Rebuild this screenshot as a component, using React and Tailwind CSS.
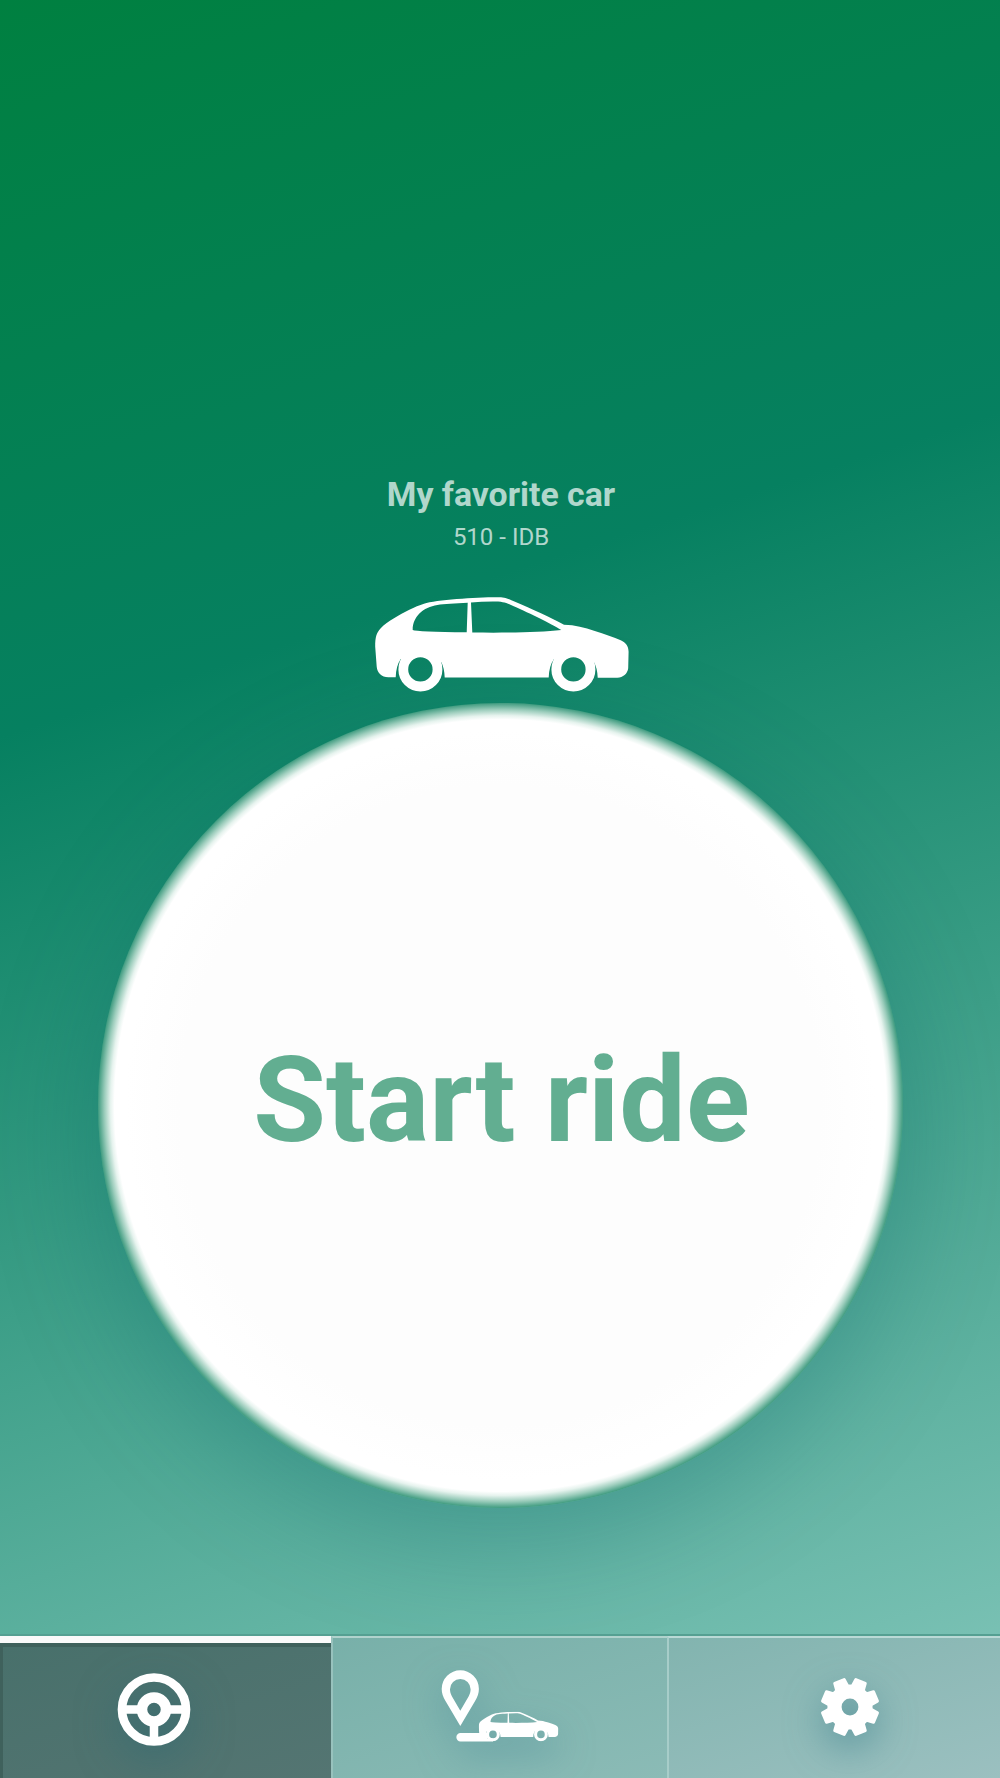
const CAR_BODY =
  "M.2 49.7C.2 40 1.5 36 5.7 31.3C9 27.5 14 24.3 19 21.3C29 15 40 9.5 49 6.7C61 3 100 .3 122 .3C129 .3 131 .8 137 3.5C158 12.5 176 20.5 189 27.7C200 28 210 30.5 219 33.7C230 37.3 239 40 245.7 43.3C251 46 253.4 49 253.6 54.7L253.2 71.3C252.5 77 248 80.5 242.4 80.7H222.7Q222.3 71 219 65.3L215 67A18 18 0 0 0 182 64L179 62Q174 69 173.7 80.6H69.7Q69.3 71 66.4 65.3L62 67A18 18 0 0 0 29 64L25.7 62Q21 69 20.7 80.3H13.4C6.5 80 2.3 76 1.7 69.7ZM37.7 33Q42 34.9 91.7 35.3L92.7 5.7C80 6.2 69 7 62.4 7.9C48 10 37.5 20 37.7 33ZM97.3 35.5C130 36 165 35.4 186.3 33C176 26.5 150 14 136 8C130 5.4 127 4.6 118 4.6Q106 4.7 96 5.5Z";

function CarShape() {
  return (
    <>
      <path fillRule="evenodd" d={CAR_BODY} />
      <g fill="none" stroke="currentColor" strokeWidth="9.8">
        <circle cx="45.4" cy="72.4" r="17.1" />
        <circle cx="198.4" cy="72.4" r="17.1" />
      </g>
    </>
  );
}

function Wheel() {
  return (
    <svg viewBox="0 0 74 74" className="h-[74px] w-[74px] drop-shadow-[0_14px_20px_rgba(30,100,115,0.5)]" fill="none" stroke="currentColor">
      <circle cx="37" cy="36.5" r="32" strokeWidth="8.7" />
      <circle cx="37" cy="36.5" r="12" strokeWidth="10.5" />
      <path d="M6 36.5H22M52 36.5H68M37 51.5V67.5" strokeWidth="8.5" />
    </svg>
  );
}

function Gear() {
  const teeth = [22.5, 67.5, 112.5, 157.5, 202.5, 247.5, 292.5, 337.5];
  return (
    <svg viewBox="-30 -30 60 60" className="h-[60px] w-[60px] drop-shadow-[0_14px_18px_rgba(50,120,135,0.55)]">
      <g fill="currentColor" stroke="currentColor" strokeLinejoin="round" strokeWidth="3">
        {teeth.map((angle) => (
          <path key={angle} d="M-5.1 -27.6L5.1 -27.6L6.1 -19L-6.1 -19Z" transform={`rotate(${angle})`} />
        ))}
      </g>
      <circle r="15.5" fill="none" stroke="currentColor" strokeWidth="14.2" />
    </svg>
  );
}

function RideHistory() {
  return (
    <svg viewBox="0 0 118 74" fill="currentColor" className="h-[74px] w-[118px] drop-shadow-[0_14px_18px_rgba(60,130,145,0.55)]">
      <path
        fillRule="evenodd"
        d="M19.3 56L4.5 31C2 26.5 .7 23 .7 18.9A18.6 18.6 0 0 1 37.9 18.9C37.9 23 36.6 26.5 34.1 31ZM19.3 40.7L27.6 26.5C29 23.8 29.6 21.5 29.6 19.2A10.3 10.3 0 0 0 9 19.2C9 21.5 9.6 23.8 11 26.5Z"
      />
      <path d="M19.5 63.1H46.5V68.6H52V71.4H19.5A4.15 4.15 0 0 1 19.5 63.1Z" />
      <svg x="37.7" y="41.7" width="80" height="29.8" viewBox="0 0 255 95">
        <CarShape />
      </svg>
    </svg>
  );
}

export default function App() {
  return (
    <main className="flex h-[1778px] w-[1000px] flex-col overflow-hidden bg-[linear-gradient(162deg,#008040_0%,#068060_35%,#86c8bd_100%)] font-['Roboto',sans-serif] text-white">
      <section className="flex flex-1 flex-col items-center pt-[474px]">
        <h1 className="z-10 ml-[2px] text-[33.8px] leading-[42px] font-bold text-white/70">My favorite car</h1>
        <p className="z-10 ml-[2px] text-[24px] leading-[42px] text-white/70">510 - IDB</p>
        <svg viewBox="0 0 255 95" fill="currentColor" className="z-10 mt-[39px] ml-[4px] h-[95px] w-[255px]">
          <CarShape />
        </svg>
        <button className="mt-[11px] flex h-[805px] w-[805px] shrink-0 items-center justify-center rounded-full bg-[radial-gradient(circle_closest-side,#fdfdfd_320px,#ffffff_375px,#ffffff_386px,#e6f3ee_390px,#9ccdbc_396px,#469f84_402px)] pb-[9px] pl-[3px] text-[118.2px] font-bold text-[#62ae91] shadow-[0_32px_110px_rgba(0,90,100,0.28)]">
          Start ride
        </button>
      </section>
      <nav className="flex h-[144px] shrink-0 border-t-2 border-[#55a092]">
        <button className="w-[331px] border-t-[7px] border-[#fafafa] bg-[#4c736f]">
          <div className="flex h-full items-start justify-center border-t-[4px] border-l-[3px] border-[#3f615c] bg-[linear-gradient(162deg,#48706b,#547572)] pt-[26px] pr-[26px]">
            <Wheel />
          </div>
        </button>
        <button className="flex w-[336px] items-start border-t-2 border-l-2 border-t-[#b0d3cd] border-l-[#98c2bd] bg-[linear-gradient(162deg,#78b0a9,#8bbbb6)] pt-[32px] pl-[108px]">
          <RideHistory />
        </button>
        <button className="flex w-[333px] items-start border-t-2 border-l-2 border-t-[#badad6] border-l-[#a7cdc9] bg-[linear-gradient(162deg,#82b4af,#9bc0c0)] pt-[39px] pl-[151px]">
          <Gear />
        </button>
      </nav>
    </main>
  );
}
